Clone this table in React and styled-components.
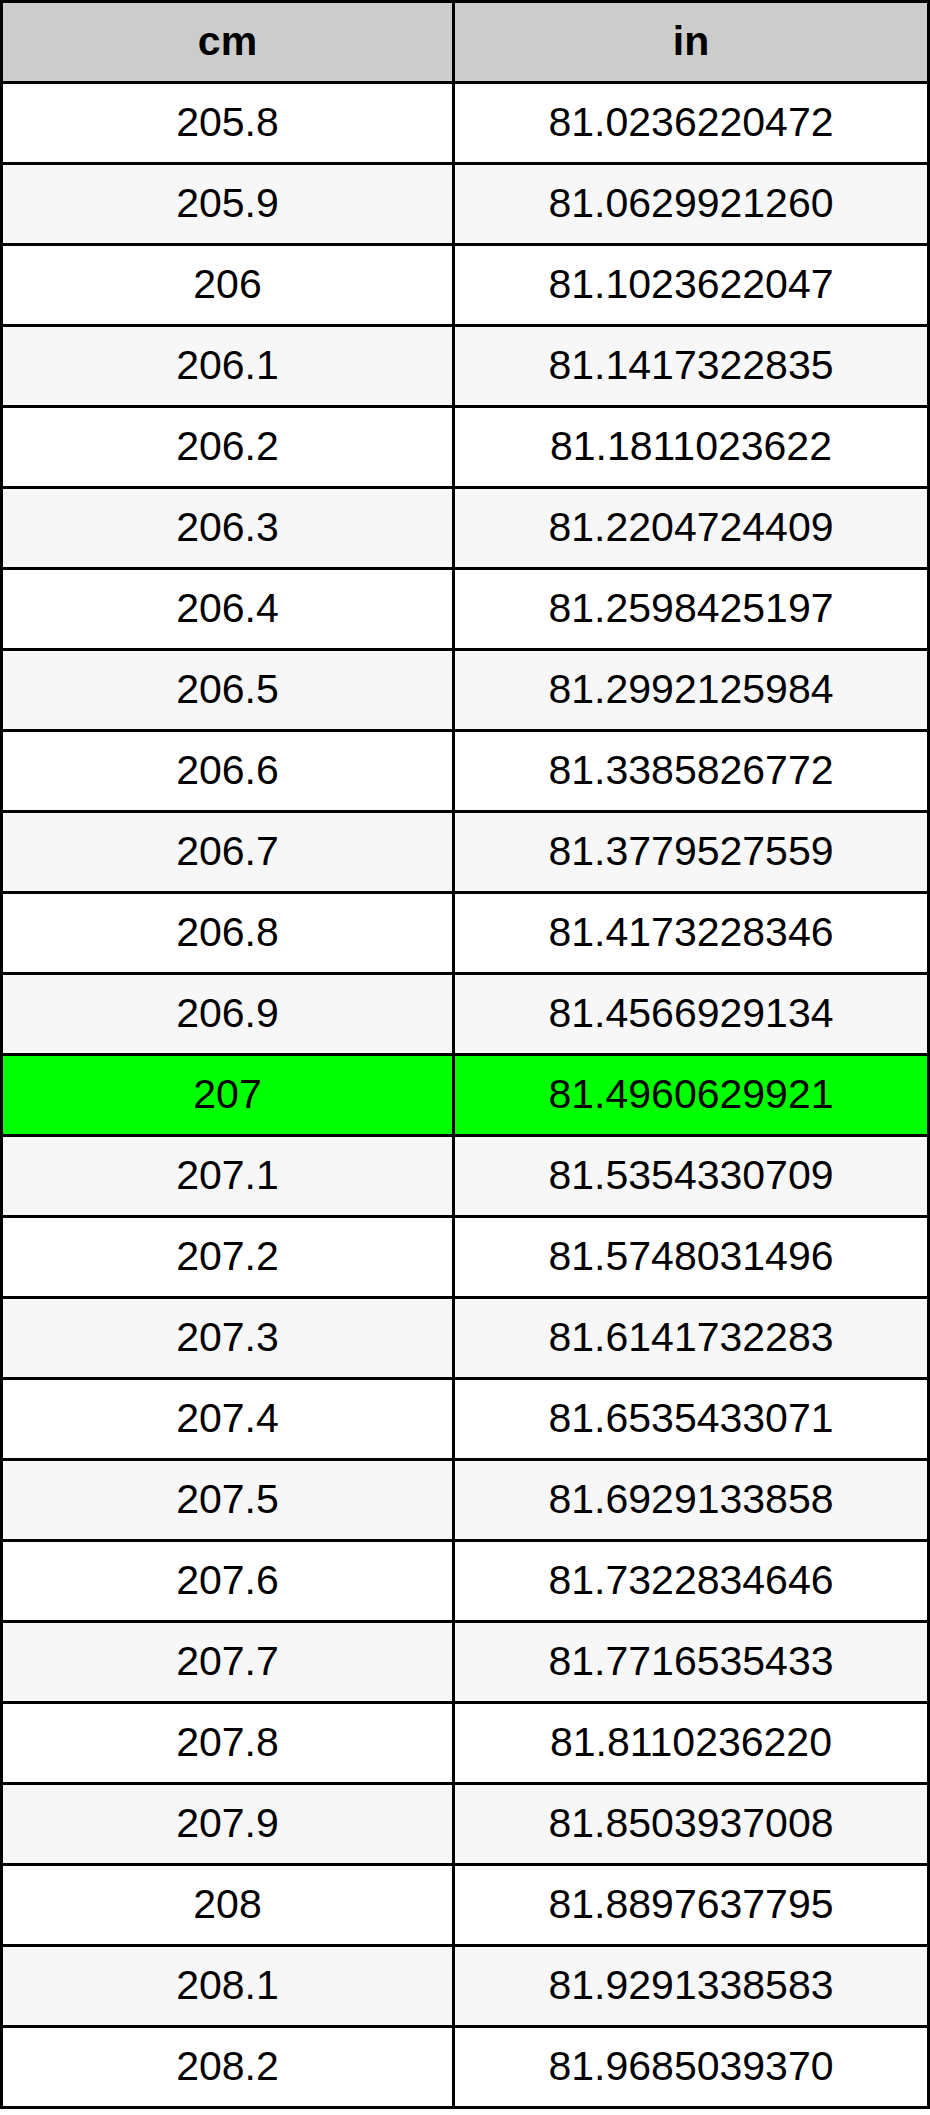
import styled, { createGlobalStyle } from 'styled-components';

const GlobalStyle = createGlobalStyle`
	body {
		margin: 0;
		background: #ffffff;
		font-family: "Liberation Sans", Arial, sans-serif;
	}
`;

const rows = [
	['205.8', '81.0236220472'],
	['205.9', '81.0629921260'],
	['206', '81.1023622047'],
	['206.1', '81.1417322835'],
	['206.2', '81.1811023622'],
	['206.3', '81.2204724409'],
	['206.4', '81.2598425197'],
	['206.5', '81.2992125984'],
	['206.6', '81.3385826772'],
	['206.7', '81.3779527559'],
	['206.8', '81.4173228346'],
	['206.9', '81.4566929134'],
	['207', '81.4960629921'],
	['207.1', '81.5354330709'],
	['207.2', '81.5748031496'],
	['207.3', '81.6141732283'],
	['207.4', '81.6535433071'],
	['207.5', '81.6929133858'],
	['207.6', '81.7322834646'],
	['207.7', '81.7716535433'],
	['207.8', '81.8110236220'],
	['207.9', '81.8503937008'],
	['208', '81.8897637795'],
	['208.1', '81.9291338583'],
	['208.2', '81.9685039370'],
];

function App() {
	return (
		<>
			<GlobalStyle />
			<Table>
				<Row $bg="#cccccc">
					<Cell $bold>cm</Cell>
					<Cell $bold>in</Cell>
				</Row>
				{rows.map(([cm, inch], i) => {
					const highlight = cm === '207';
					const bg = highlight ? '#00ff00' : i % 2 === 0 ? '#ffffff' : '#f7f7f7';
					return (
						<Row key={cm} $bg={bg}>
							<Cell>{cm}</Cell>
							<Cell>{inch}</Cell>
						</Row>
					);
				})}
			</Table>
		</>
	);
}

const Table = styled.div`
	width: 930px;
	box-sizing: border-box;
	border: 3px solid #000;
	border-bottom: none;
`;

const Row = styled.div`
	display: grid;
	grid-template-columns: 449px 472px;
	column-gap: 3px;
	height: 78px;
	border-bottom: 3px solid #000;
	background: ${p => p.$bg};
	background-image: linear-gradient(#000, #000);
	background-size: 3px 100%;
	background-position: 449px 0;
	background-repeat: no-repeat;
`;

const Cell = styled.div`
	display: flex;
	align-items: center;
	justify-content: center;
	padding-bottom: 2px;
	font-size: 41px;
	font-weight: ${p => (p.$bold ? 700 : 400)};
	color: #000;
`;

export default App;
